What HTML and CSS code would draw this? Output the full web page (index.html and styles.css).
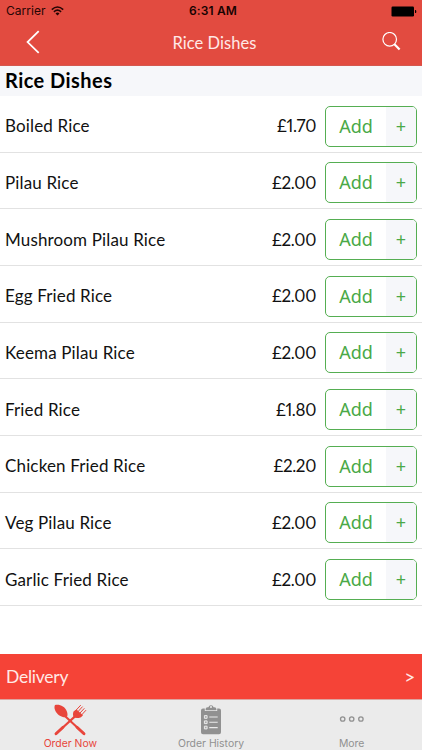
FILE: index.html
```html
<!DOCTYPE html>
<html lang="en">
<head>
<meta charset="utf-8">
<title>Rice Dishes</title>
<link rel="stylesheet" href="styles.css">
</head>
<body>
<div class="app">
  <header class="header">
    <div class="status">
      <div class="carrier"><span>Carrier</span>
        <svg width="13" height="10" viewBox="0 0 13 10" fill="none" stroke="#260504" stroke-width="1.6"><path d="M.8 3.6Q6.5-1.6 12.2 3.6M2.9 5.8Q6.5 2.6 10.1 5.8"/><path d="M4.5 7.4Q6.5 5.8 8.5 7.4L6.5 9.5Z" fill="#260504" stroke="none"/></svg>
      </div>
      <span class="time">6:31 AM</span>
      <svg class="battery" width="26" height="11" viewBox="0 0 26 11"><rect x=".5" y=".5" width="22.5" height="10" rx="1.2"/><path d="M24 4h.6q.7 0 .7 1.5t-.7 1.5H24z"/></svg>
    </div>
    <nav class="nav">
      <svg class="back" width="14" height="24" viewBox="0 0 14 24" fill="none" stroke="#fff" stroke-width="1.8"><path d="M12.7 1.2 1.6 12.1 12.7 22.8"/></svg>
      <h1>Rice Dishes</h1>
      <svg class="search" width="19" height="20" viewBox="0 0 19 20" fill="none" stroke="#fff"><circle cx="7.7" cy="7.3" r="6.8" stroke-width="1.2"/><path d="m12.2 12.1 5.4 5.5" stroke-width="2.2"/></svg>
    </nav>
  </header>
  <h2 class="section">Rice Dishes</h2>
  <main class="menu">
    <div class="row"><span class="name">Boiled Rice</span><span class="price">£1.70</span><button class="add"><span>Add</span><b>+</b></button></div>
    <div class="row"><span class="name">Pilau Rice</span><span class="price">£2.00</span><button class="add"><span>Add</span><b>+</b></button></div>
    <div class="row"><span class="name">Mushroom Pilau Rice</span><span class="price">£2.00</span><button class="add"><span>Add</span><b>+</b></button></div>
    <div class="row"><span class="name">Egg Fried Rice</span><span class="price">£2.00</span><button class="add"><span>Add</span><b>+</b></button></div>
    <div class="row"><span class="name">Keema Pilau Rice</span><span class="price">£2.00</span><button class="add"><span>Add</span><b>+</b></button></div>
    <div class="row"><span class="name">Fried Rice</span><span class="price">£1.80</span><button class="add"><span>Add</span><b>+</b></button></div>
    <div class="row"><span class="name">Chicken Fried Rice</span><span class="price">£2.20</span><button class="add"><span>Add</span><b>+</b></button></div>
    <div class="row"><span class="name">Veg Pilau Rice</span><span class="price">£2.00</span><button class="add"><span>Add</span><b>+</b></button></div>
    <div class="row"><span class="name">Garlic Fried Rice</span><span class="price">£2.00</span><button class="add"><span>Add</span><b>+</b></button></div>
  </main>
  <div class="delivery"><span>Delivery</span><span class="arrow">&gt;</span></div>
  <footer class="tabs">
    <div class="tab active">
      <svg width="34" height="33" viewBox="0 0 34 33" fill="none" stroke="#e8453b" stroke-linecap="round">
        <path d="M12.5 12.4 31 29.7" stroke-width="2.1"/><path d="M22 12.4 3 29.7" stroke-width="2.1"/><path d="m24 23.2 7 6.5M10 23.2 3 29.7" stroke-width="2.9"/>
        <path d="M2 1C6-.2 12 2 13.8 7.2 14.7 9.8 14.8 11.8 13.8 12.7 12.8 13.6 10 13.3 7.4 12 2.5 9.5.4 4 2 1Z" fill="#e8453b" stroke="none"/>
        <path d="M20.7 7.2 23.5 5.5 30 11.3 28 13.2C25.2 14.3 22.4 14.3 21 13.3 19.7 12 19.7 9.2 20.7 7.2Z" fill="#e8453b" stroke="none"/>
        <path d="m22.3 7 5.2-5.6M24.1 8.6l5.2-5.7M25.9 10.2l5.2-5.6M27.8 11.8l5-5.4" stroke-width="1"/>
      </svg>
      <span>Order Now</span>
    </div>
    <div class="tab">
      <svg width="20" height="31" viewBox="0 0 20 31">
        <path d="M2 4.5h1.8v2.6h12.4V4.5H18q2 0 2 2v21.8q0 2-2 2H2q-2 0-2-2V6.5q0-2 2-2Z" fill="#919191"/>
        <path fill-rule="evenodd" d="M4.6 6.2V5q0-1.8 2-1.8h.8a2.7 2.7 0 0 1 5.2 0h.8q2 0 2 1.8v1.2ZM10 2.1a1 1 0 1 0 0 2 1 1 0 0 0 0-2Z" fill="#919191"/>
        <path d="M8.3 13h8.4M8.3 18.3h8.4M8.3 23.6h8.4" stroke="#ebebeb" stroke-width="1.1"/>
        <path d="M3.4 11.6h2.7v2.7H3.4zM3.4 16.9h2.7v2.7H3.4zM3.4 22.2h2.7v2.7H3.4z" fill="#aaa" stroke="#ebebeb"/>
      </svg>
      <span>Order History</span>
    </div>
    <div class="tab more">
      <svg width="26" height="8" viewBox="0 0 26 8" fill="none" stroke="#919191" stroke-width="1.3"><circle cx="3.7" cy="4" r="2.2"/><circle cx="12.7" cy="4" r="2.2"/><circle cx="21.9" cy="4" r="2.2"/></svg>
      <span>More</span>
    </div>
  </footer>
</div>
</body>
</html>
```
FILE: styles.css
```css
* { box-sizing: border-box; }
body { margin: 0; background: #fff; color: #111; font-family: Lato, sans-serif; }
.app { width: 422px; height: 750px; display: flex; flex-direction: column; overflow: hidden; }
.header { height: 65.5px; flex: none; background: #e24b40; border-bottom: 1px solid #d4584f; }
.status { height: 21px; display: grid; grid-template-columns: 1fr auto 1fr; align-items: center; padding: 1px 5px 0 6px; font: 12px/20px Inter, sans-serif; color: #260504; }
.carrier { display: flex; align-items: center; gap: 5px; letter-spacing: .05px; }
.time { font-weight: 600; letter-spacing: .12px; color: #180302; padding-left: 3px; }
.battery { justify-self: end; fill: #000; }
.nav { height: 42px; display: grid; grid-template-columns: 1fr auto 1fr; align-items: center; padding: 0 21px 0 26px; }
.nav h1 { margin: 0; padding: 2px 0 0 2px; font-size: 16.5px; line-height: 20px; font-weight: 400; letter-spacing: .05px; color: #ffe9e7; }
.search { justify-self: end; }
.section { flex: none; height: 30.5px; margin: 0; padding: 0 5px; background: #f6f7fa; color: #000; font-size: 20px; line-height: 28px; font-weight: 700; letter-spacing: .45px; }
.menu { flex: none; height: 558px; }
.row { height: 56.67px; display: flex; align-items: center; padding: 5px 5px 0 5px; border-bottom: 1px solid #e2e2e2; font-size: 17px; line-height: 22px; }
.name { flex: 1; letter-spacing: .15px; }
.price { margin-right: 9px; font-feature-settings: "pnum"; letter-spacing: -.35px; }
.add { width: 92px; height: 41px; display: flex; padding: 0; border: 1px solid #55ae52; border-radius: 5px; overflow: hidden; background: #fff; color: #4aa947; font: 18px/39px "Noto Sans", sans-serif; }
.add span { width: 60px; }
.add b { flex: 1; font-weight: 400; background: #f6f7fa; }
.delivery { flex: none; height: 45px; display: flex; align-items: center; justify-content: space-between; padding: 0 7px 0 6px; background: #f54337; color: #ffe9e6; font-size: 17.5px; letter-spacing: -.25px; }
.arrow { font-size: 19px; line-height: 20px; }
.tabs { flex: 1; display: grid; grid-template-columns: repeat(3, 1fr); background: #ebebeb; border-top: 1px solid #dda5a0; }
.tab { display: flex; flex-direction: column; align-items: center; justify-content: space-between; padding-top: 4px; font: 10.4px/13px Inter, sans-serif; color: #919191; }
.tab.active { color: #e8453b; }
.tab.more { padding-top: 15px; }
```
